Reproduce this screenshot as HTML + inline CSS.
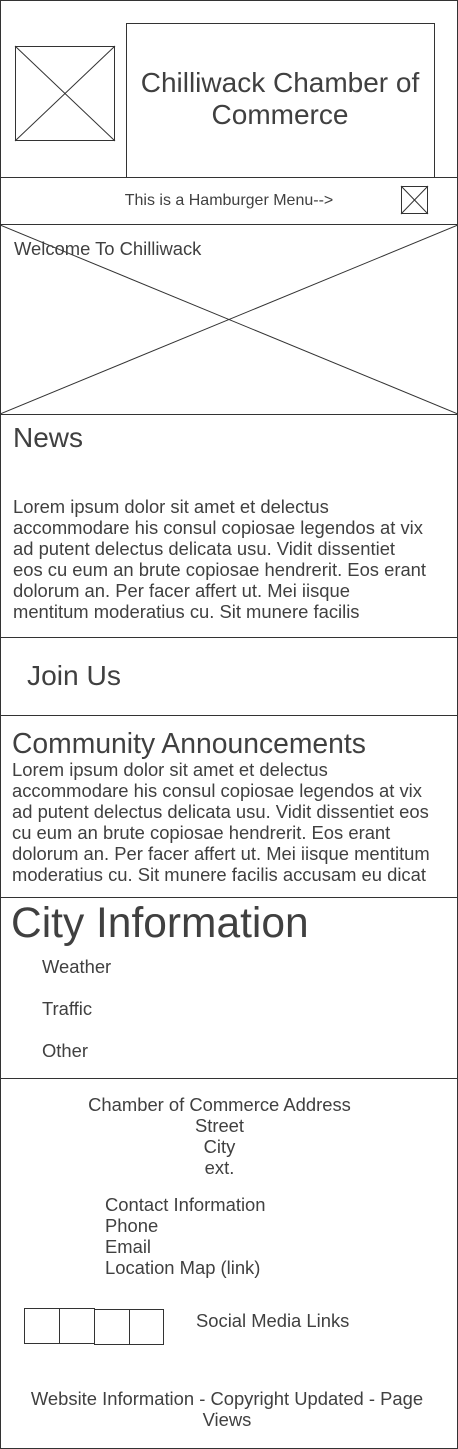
<!DOCTYPE html>
<html><head><meta charset="utf-8"><style>
body{margin:0;width:458px;height:1449px;position:relative;font-family:"Liberation Sans",sans-serif;color:#404040;background:#fff;overflow:hidden}
.a{position:absolute;white-space:nowrap}
.b{position:absolute;box-sizing:border-box;border:1px solid #333}
.h{position:absolute;left:0;width:458px;height:1px;background:#333}
svg{position:absolute;left:0;top:0}
.t{font-size:18.4px;line-height:21px}
</style></head><body>
<div class="b" style="left:0;top:0;width:458px;height:1449px"></div>
<svg width="458" height="1449">
<g stroke="#333" stroke-width="1" fill="none">
<rect x="15.5" y="46.5" width="99" height="94"/>
<line x1="15" y1="46" x2="115" y2="141"/><line x1="115" y1="46" x2="15" y2="141"/>
<polyline points="126.5,177 126.5,23.5 434.5,23.5 434.5,177"/>
<rect x="401.5" y="186.5" width="26" height="27"/>
<line x1="401" y1="186" x2="428" y2="214"/><line x1="428" y1="186" x2="401" y2="214"/>
<line x1="0" y1="225" x2="458" y2="414"/><line x1="458" y1="225" x2="0" y2="414"/>
<rect x="24.5" y="1308.5" width="35" height="35"/>
<rect x="59.5" y="1308.5" width="35" height="35"/>
<rect x="94.5" y="1309.5" width="35" height="35"/>
<rect x="129.5" y="1309.5" width="34" height="35"/>
</g></svg>
<div class="h" style="top:177px"></div>
<div class="h" style="top:224px"></div>
<div class="h" style="top:414px"></div>
<div class="h" style="top:637px"></div>
<div class="h" style="top:715px"></div>
<div class="h" style="top:897px"></div>
<div class="h" style="top:1078px"></div>
<div class="a" style="left:126px;width:308px;top:67px;text-align:center;font-size:28px;line-height:32px;white-space:normal">Chilliwack Chamber of Commerce</div>
<div class="a" style="left:0;width:458px;top:192px;text-align:center;font-size:16px">This is a Hamburger Menu--&gt;</div>
<div class="a" style="left:14px;top:238px;font-size:18.4px">Welcome To Chilliwack</div>
<div class="a" style="left:13px;top:422px;font-size:28px">News</div>
<div class="a t" style="left:13px;top:496px">Lorem ipsum dolor sit amet et delectus<br>accommodare his consul copiosae legendos at vix<br>ad putent delectus delicata usu. Vidit dissentiet<br>eos cu eum an brute copiosae hendrerit. Eos erant<br>dolorum an. Per facer affert ut. Mei iisque<br>mentitum moderatius cu. Sit munere facilis</div>
<div class="a" style="left:27px;top:659px;font-size:28.2px">Join Us</div>
<div class="a" style="left:12px;top:727px;font-size:28.3px">Community Announcements</div>
<div class="a t" style="left:12px;top:759px">Lorem ipsum dolor sit amet et delectus<br>accommodare his consul copiosae legendos at vix<br>ad putent delectus delicata usu. Vidit dissentiet eos<br>cu eum an brute copiosae hendrerit. Eos erant<br>dolorum an. Per facer affert ut. Mei iisque mentitum<br>moderatius cu. Sit munere facilis accusam eu dicat</div>
<div class="a" style="left:11px;top:899px;font-size:42.5px;line-height:50px">City Information</div>
<div class="a" style="left:42px;top:956px;font-size:18.4px">Weather</div>
<div class="a" style="left:42px;top:998px;font-size:18.4px">Traffic</div>
<div class="a" style="left:42px;top:1040px;font-size:18.4px">Other</div>
<div class="a t" style="left:0;width:439px;top:1094px;text-align:center">Chamber of Commerce Address<br>Street<br>City<br>ext.</div>
<div class="a t" style="left:105px;top:1194px">Contact Information<br>Phone<br>Email<br>Location Map (link)</div>
<div class="a" style="left:196px;top:1310px;font-size:18.4px">Social Media Links</div>
<div class="a t" style="left:14px;width:426px;top:1388px;text-align:center;white-space:normal">Website Information - Copyright Updated - Page Views</div>
</body></html>
